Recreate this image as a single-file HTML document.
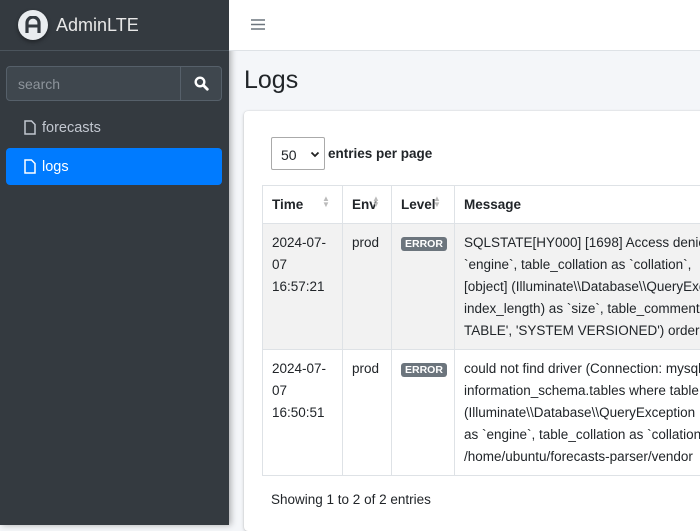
<!DOCTYPE html>
<html><head><meta charset="utf-8">
<style>
*{box-sizing:border-box;margin:0;padding:0}
html,body{width:700px;height:525px;overflow:hidden;font-family:"Liberation Sans",sans-serif;background:#f4f6f9;color:#212529}
.sb{position:absolute;left:0;top:0;width:229px;height:525px;background:#343a40;box-shadow:2px 0 6px rgba(0,0,0,.3)}
.brand{height:51px;border-bottom:1px solid #4b545c;display:flex;align-items:center;padding-left:18px}
.logo{width:30px;height:30px;border-radius:50%;background:#e9ecef;display:flex;align-items:center;justify-content:center;box-shadow:0 2px 4px rgba(0,0,0,.4)}
.brand span{color:#e8e8e8;font-size:18px;margin-left:8px}
.search{position:absolute;left:6px;top:66px;width:216px;height:35px;border:1px solid #56606a;border-radius:4px;background:#3f474e;display:flex}
.search .in{flex:1;color:#8d949b;font-size:14px;padding:9px 11px}
.search .bt{width:41px;border-left:1px solid #56606a;display:flex;align-items:center;justify-content:center}
.nav{position:absolute;left:6px;width:216px;height:37px;border-radius:4px;display:flex;align-items:center;padding-left:18px;color:#c2c7d0;font-size:14.5px}
.nav svg{margin-right:6px}
.nav.act{background:#007bff;color:#fff}
.hd{position:absolute;left:229px;top:0;right:0;height:51px;background:#fff;border-bottom:1px solid #dee2e6}
.h1{position:absolute;left:244px;top:66px;font-size:25px;color:#212529}
.card{position:absolute;left:244px;top:111px;width:470px;height:420px;background:#fff;border-radius:4px;box-shadow:0 0 1px rgba(0,0,0,.15),0 1px 3px rgba(0,0,0,.2)}
.sel{position:absolute;left:271px;top:137px;width:54px;height:33px;border:1px solid #aaa;border-radius:2px;font-size:14px;padding:9px 0 0 9px}
.sel svg{position:absolute;right:4px;top:13px}
.epp{position:absolute;left:328px;top:146px;font-size:13.5px;font-weight:bold}
table{position:absolute;left:262px;top:185px;border-collapse:collapse;font-size:13.5px;table-layout:fixed;width:460px}
td,th{border:1px solid #dee2e6;vertical-align:top;text-align:left;padding:0 9px;line-height:22px;overflow:hidden}
th{height:38px;padding-top:8px;font-weight:bold;position:relative}
th i{position:absolute;top:10px;font-style:normal;color:#bbb;font-size:8px;line-height:6px}
tr.r td{padding-top:8px}
tr.s td{background:#f2f2f2}
.m div{white-space:nowrap}
.badge{display:inline-block;background:#6c757d;color:#fff;font-size:10.5px;font-weight:bold;padding:1px 4px;border-radius:3px;line-height:12px;margin-top:5px}
.foot{position:absolute;left:271px;top:492px;font-size:13.5px}
</style></head><body>
<div class="sb">
 <div class="brand"><div class="logo"><svg width="18" height="18" viewBox="0 0 18 18"><path d="M3 17V7a6 6 0 0 1 12 0v10" fill="none" stroke="#343a40" stroke-width="3.2"/><path d="M3 10h12" stroke="#343a40" stroke-width="3"/></svg></div><span>Admin<span style="margin:0;font-weight:300">LTE</span></span></div>
 <div class="search"><div class="in">search</div><div class="bt"><svg width="15" height="15" viewBox="0 0 15 15"><circle cx="6" cy="6" r="4.3" fill="none" stroke="#fff" stroke-width="2.4"/><path d="M9.3 9.3l4 4" stroke="#fff" stroke-width="2.8" stroke-linecap="round"/></svg></div></div>
 <div class="nav" style="top:109px"><svg width="12" height="15" viewBox="0 0 12 15"><path d="M1 1h6.5L11 4.5V14H1z" fill="none" stroke="#c2c7d0" stroke-width="1.5"/></svg>forecasts</div>
 <div class="nav act" style="top:148px"><svg width="12" height="15" viewBox="0 0 12 15"><path d="M1 1h6.5L11 4.5V14H1z" fill="none" stroke="#fff" stroke-width="1.5"/></svg>logs</div>
</div>
<div class="hd"><svg style="position:absolute;left:22px;top:18px" width="14" height="13" viewBox="0 0 14 13"><path d="M0 2h14M0 6.5h14M0 11h14" stroke="#6c757d" stroke-width="1.6"/></svg></div>
<div class="h1">Logs</div>
<div class="card"></div>
<div class="sel">50<svg width="10" height="7" viewBox="0 0 10 7"><path d="M1.5 1.5l3.5 3.5 3.5-3.5" fill="none" stroke="#222" stroke-width="1.8"/></svg></div>
<div class="epp">entries per page</div>
<table>
<colgroup><col style="width:80px"><col style="width:49px"><col style="width:63px"><col style="width:268px"></colgroup>
<tr><th>Time<i style="left:59px">▲<br>▼</i></th><th>Env<i style="left:29px">▲<br>▼</i></th><th>Level<i style="left:41px">▲<br>▼</i></th><th>Message</th></tr>
<tr class="r s" style="height:126px"><td>2024-07-<br>07<br>16:57:21</td><td>prod</td><td><span class="badge">ERROR</span></td><td class="m"><div>SQLSTATE[HY000] [1698] Access denied for user</div><div>`engine`, table_collation as `collation`,</div><div>[object] (Illuminate\\Database\\QueryException</div><div>index_length) as `size`, table_comment as</div><div>TABLE', 'SYSTEM VERSIONED') order by</div></td></tr>
<tr class="r" style="height:126px"><td>2024-07-<br>07<br>16:50:51</td><td>prod</td><td><span class="badge">ERROR</span></td><td class="m"><div>could not find driver (Connection: mysql</div><div>information_schema.tables where table</div><div>(Illuminate\\Database\\QueryException</div><div>as `engine`, table_collation as `collation</div><div>/home/ubuntu/forecasts-parser/vendor</div></td></tr>
</table>
<div class="foot">Showing 1 to 2 of 2 entries</div>
</body></html>
